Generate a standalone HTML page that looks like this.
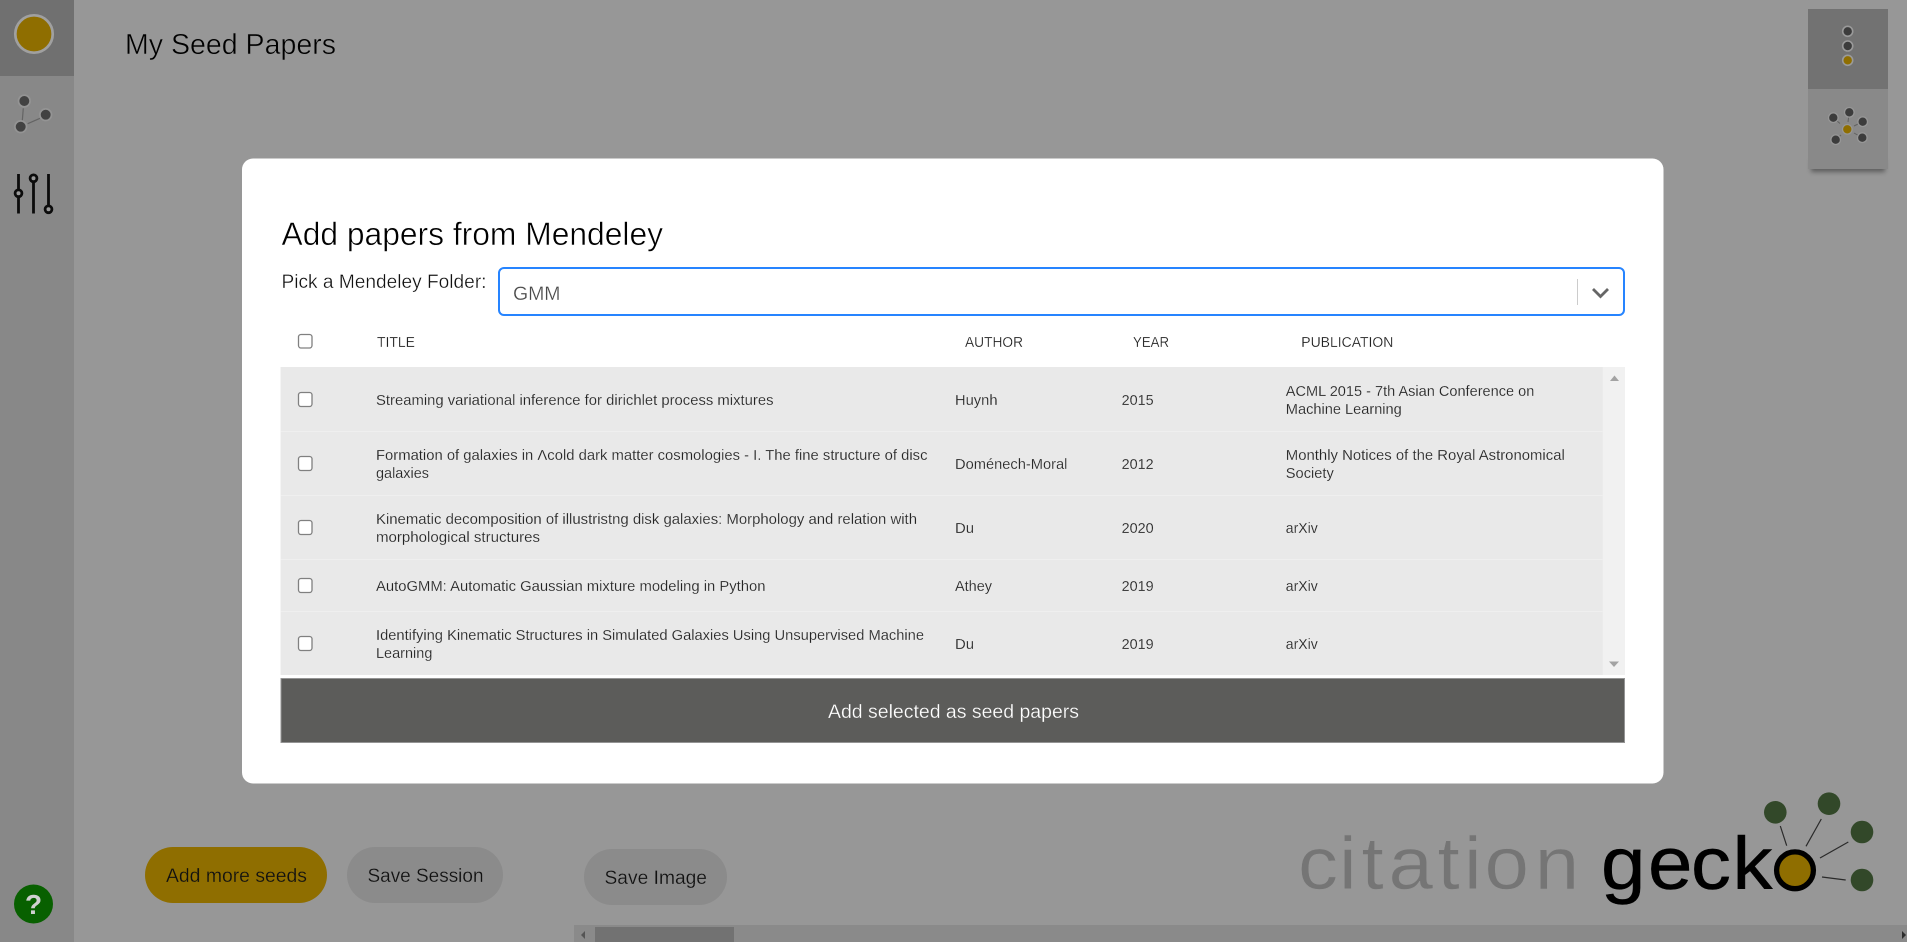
<!DOCTYPE html>
<html lang="en">
<head>
<meta charset="utf-8">
<title>Citation Gecko</title>
<style>
html,body{margin:0;padding:0;width:1907px;height:942px;overflow:hidden;background:#979797}
svg{display:block}
text{font-family:"Liberation Sans",sans-serif;white-space:pre}
.r{font-size:14.6px;fill:#222;stroke:#e9e9e9;stroke-width:.16px}
.h{font-size:14.4px;fill:#1c1c1c;stroke:#fff;stroke-width:.2px}
.b{font-size:19px;fill:#111;stroke-width:.25px}
.cb{fill:#fff;stroke:#808080;stroke-width:1.3}
</style>
</head>
<body>
<svg width="1907" height="942" viewBox="0 0 1907 942" xmlns="http://www.w3.org/2000/svg">
<defs>
<filter id="bl" x="-20%" y="-100%" width="140%" height="300%"><feGaussianBlur stdDeviation="2.5"/></filter>
</defs>
<rect width="1907" height="942" fill="#979797"/>

<!-- sidebar -->
<rect width="74" height="942" fill="#888"/>
<rect width="74" height="76" fill="#707070"/>
<circle cx="34" cy="34" r="18.700" fill="#8f6e00" stroke="#a0a0a0" stroke-width="2.700"/>
<g stroke="#646464" stroke-width="1.200"><line x1="23.300" y1="108.300" x2="22.300" y2="120.700"/><line x1="27.700" y1="123.700" x2="40" y2="118.300"/></g>
<g fill="#424242" stroke="#949494" stroke-width="1.700"><circle cx="24.300" cy="101" r="5.800"/><circle cx="45.700" cy="114.700" r="5.800"/><circle cx="20.700" cy="126.700" r="5.800"/></g>
<g stroke="#0c0c0c" stroke-width="2.800" fill="#9a9a9a">
<line x1="18.500" y1="174" x2="18.500" y2="213.500"/><line x1="33.500" y1="174" x2="33.500" y2="213.500"/><line x1="48.500" y1="174" x2="48.500" y2="213.500"/>
<circle cx="18.500" cy="193.300" r="3.400"/><circle cx="33.500" cy="178.300" r="3.400"/><circle cx="48.500" cy="209.300" r="3.400"/>
</g>
<circle cx="33.500" cy="904" r="19.500" fill="#086000"/>
<text x="33.500" y="914" text-anchor="middle" font-size="28" font-weight="700" fill="#d0d0d0">?</text>

<!-- page title -->
<text x="125" y="54" font-size="28.500" fill="#000" stroke="#979797" stroke-width=".5" textLength="211" lengthAdjust="spacingAndGlyphs">My Seed Papers</text>

<!-- top right panel -->
<rect x="1811" y="160" width="74" height="12" fill="#000" opacity=".38" filter="url(#bl)"/>
<rect x="1808" y="9" width="80" height="160" fill="#898989"/>
<rect x="1808" y="9" width="80" height="80" fill="#727272"/>
<g stroke="#9a9a9a" stroke-width="1.600">
<circle cx="1847.700" cy="31.300" r="5" fill="#3c3c3c"/>
<circle cx="1847.700" cy="46" r="5" fill="#3c3c3c"/>
<circle cx="1847.700" cy="60.300" r="5" fill="#8f6e00"/>
</g>
<g stroke="#626262" stroke-width="1">
<line x1="1840" y1="123.500" x2="1833.300" y2="117.700"/><line x1="1848" y1="122" x2="1849.300" y2="112.300"/><line x1="1854" y1="126" x2="1862.700" y2="121.700"/><line x1="1854" y1="133" x2="1862.300" y2="137.700"/><line x1="1841" y1="135" x2="1835.700" y2="139.700"/>
</g>
<g stroke="#979797" stroke-width="1.300" fill="#3c3c3c">
<circle cx="1833.300" cy="117.700" r="4.800"/><circle cx="1849.300" cy="112.300" r="4.800"/><circle cx="1862.700" cy="121.700" r="4.800"/><circle cx="1862.300" cy="137.700" r="4.800"/><circle cx="1835.700" cy="139.700" r="4.800"/>
<circle cx="1847.300" cy="129.300" r="4.800" fill="#8f6e00"/>
</g>

<!-- bottom buttons -->
<rect x="145" y="847" width="182" height="56" rx="28" fill="#8f6e00"/>
<text class="b" style="stroke:#8f6e00" x="166" y="882" textLength="141" lengthAdjust="spacingAndGlyphs">Add more seeds</text>
<rect x="347" y="847" width="156" height="56" rx="28" fill="#8b8b8b"/>
<text class="b" style="stroke:#8b8b8b" x="367.500" y="882" textLength="116" lengthAdjust="spacingAndGlyphs">Save Session</text>
<rect x="584" y="849" width="143" height="56" rx="28" fill="#8b8b8b"/>
<text class="b" style="stroke:#8b8b8b" x="604.500" y="884" textLength="102.500" lengthAdjust="spacingAndGlyphs">Save Image</text>

<!-- logo -->
<g transform="translate(1298,889) scale(1.08,1)">
<text x="0 37.96 58.8 83.8 129.2 153.7 172.7 219.2" y="0" font-size="74" fill="#757575" stroke="#979797" stroke-width=".5">citation</text>
</g>
<g transform="translate(1601,889) scale(1.08,1)">
<text x="0 43.5 83.3 121.8" y="0" font-size="74" fill="#000" stroke="#000" stroke-width=".5">geck</text>
</g>
<text x="1776" y="889" font-size="72" fill="#000" textLength="38" lengthAdjust="spacingAndGlyphs">o</text>
<circle cx="1795" cy="870.300" r="18.400" fill="#8f6e00" stroke="#000" stroke-width="5.300"/>
<g stroke="#2a2a2a" stroke-width="1.200">
<line x1="1780.300" y1="826" x2="1786.700" y2="845.700"/><line x1="1821.300" y1="819" x2="1806" y2="846.300"/><line x1="1848.300" y1="842" x2="1820" y2="858"/><line x1="1822" y1="877" x2="1845.700" y2="880"/>
</g>
<g fill="#324829"><circle cx="1775.300" cy="812.300" r="11.300"/><circle cx="1829" cy="803.700" r="11.300"/><circle cx="1862" cy="832" r="11.300"/><circle cx="1862" cy="880" r="11.300"/></g>

<!-- horizontal scrollbar -->
<rect x="574" y="925" width="1333" height="17" fill="#8a8a8a"/>
<rect x="595" y="927" width="139" height="15" fill="#727272"/>
<path d="M581 935l4-4v8z" fill="#555"/>
<path d="M1906 935l-4-4v8z" fill="#2e2e2e"/>

<!-- modal -->
<rect x="242" y="158.500" width="1421.500" height="625" rx="11" fill="#fff"/>
<text x="281.500" y="244.800" font-size="32" fill="#000" stroke="#fff" stroke-width=".5" textLength="381.500" lengthAdjust="spacingAndGlyphs">Add papers from Mendeley</text>
<text x="281.500" y="288" font-size="19" fill="#111" stroke="#fff" stroke-width=".3" textLength="205" lengthAdjust="spacingAndGlyphs">Pick a Mendeley Folder:</text>

<rect x="499" y="268" width="1125" height="47" rx="5" fill="#fff" stroke="#2684ff" stroke-width="2"/>
<text x="513" y="300" font-size="19" fill="#4a4a4a" stroke="#fff" stroke-width=".25" textLength="47.500" lengthAdjust="spacingAndGlyphs">GMM</text>
<rect x="1577" y="279" width="1" height="26" fill="#ccc"/>
<path d="M1593 289l7.500 7.500 7.500-7.500" fill="none" stroke="#666" stroke-width="2.800"/>

<!-- table header -->
<rect class="cb" x="298.500" y="334.500" width="13.500" height="13.500" rx="2.500"/>
<text class="h" x="377" y="346.800" textLength="38" lengthAdjust="spacingAndGlyphs">TITLE</text>
<text class="h" x="965" y="346.800" textLength="58" lengthAdjust="spacingAndGlyphs">AUTHOR</text>
<text class="h" x="1133" y="346.800" textLength="36" lengthAdjust="spacingAndGlyphs">YEAR</text>
<text class="h" x="1301.300" y="346.800" textLength="92" lengthAdjust="spacingAndGlyphs">PUBLICATION</text>

<!-- table body -->
<rect x="280.600" y="367" width="1344.400" height="308" fill="#f1f1f1"/>
<rect x="280.600" y="367" width="1322.100" height="308" fill="#e9e9e9"/>
<g fill="#efefef">
<rect x="280.600" y="431" width="1322.100" height="1"/><rect x="280.600" y="495" width="1322.100" height="1"/><rect x="280.600" y="559" width="1322.100" height="1"/><rect x="280.600" y="611" width="1322.100" height="1"/>
</g>
<path d="M1614.500 375.500l4.500 5.500h-9z" fill="#a3a3a3"/>
<path d="M1614 667l5-5.500h-10z" fill="#a3a3a3"/>

<g>
<rect class="cb" x="298.500" y="392.500" width="13.500" height="14" rx="2.500"/>
<rect class="cb" x="298.500" y="456.500" width="13.500" height="14" rx="2.500"/>
<rect class="cb" x="298.500" y="520.500" width="13.500" height="14" rx="2.500"/>
<rect class="cb" x="298.500" y="578.500" width="13.500" height="14" rx="2.500"/>
<rect class="cb" x="298.500" y="636.500" width="13.500" height="14" rx="2.500"/>
</g>

<text class="r" x="376" y="405" textLength="397.500" lengthAdjust="spacingAndGlyphs">Streaming variational inference for dirichlet process mixtures</text>
<text class="r" x="955" y="405" textLength="42.500" lengthAdjust="spacingAndGlyphs">Huynh</text>
<text class="r" x="1121.600" y="405" textLength="32" lengthAdjust="spacingAndGlyphs">2015</text>
<text class="r" x="1285.800" y="396" textLength="248.500" lengthAdjust="spacingAndGlyphs">ACML 2015 - 7th Asian Conference on</text>
<text class="r" x="1285.800" y="414" textLength="116" lengthAdjust="spacingAndGlyphs">Machine Learning</text>

<text class="r" x="376" y="460" textLength="551.500" lengthAdjust="spacingAndGlyphs">Formation of galaxies in Λcold dark matter cosmologies - I. The fine structure of disc</text>
<text class="r" x="376" y="478" textLength="53" lengthAdjust="spacingAndGlyphs">galaxies</text>
<text class="r" x="955" y="469" textLength="112.400" lengthAdjust="spacingAndGlyphs">Doménech-Moral</text>
<text class="r" x="1121.600" y="469" textLength="32" lengthAdjust="spacingAndGlyphs">2012</text>
<text class="r" x="1285.800" y="460" textLength="279" lengthAdjust="spacingAndGlyphs">Monthly Notices of the Royal Astronomical</text>
<text class="r" x="1285.800" y="478" textLength="48" lengthAdjust="spacingAndGlyphs">Society</text>

<text class="r" x="376" y="524" textLength="541" lengthAdjust="spacingAndGlyphs">Kinematic decomposition of illustristng disk galaxies: Morphology and relation with</text>
<text class="r" x="376" y="542" textLength="164" lengthAdjust="spacingAndGlyphs">morphological structures</text>
<text class="r" x="955" y="533" textLength="19" lengthAdjust="spacingAndGlyphs">Du</text>
<text class="r" x="1121.600" y="533" textLength="32" lengthAdjust="spacingAndGlyphs">2020</text>
<text class="r" x="1285.800" y="533" textLength="32" lengthAdjust="spacingAndGlyphs">arXiv</text>

<text class="r" x="376" y="591" textLength="389.500" lengthAdjust="spacingAndGlyphs">AutoGMM: Automatic Gaussian mixture modeling in Python</text>
<text class="r" x="955" y="591" textLength="37" lengthAdjust="spacingAndGlyphs">Athey</text>
<text class="r" x="1121.600" y="591" textLength="32" lengthAdjust="spacingAndGlyphs">2019</text>
<text class="r" x="1285.800" y="591" textLength="32" lengthAdjust="spacingAndGlyphs">arXiv</text>

<text class="r" x="376" y="640" textLength="548" lengthAdjust="spacingAndGlyphs">Identifying Kinematic Structures in Simulated Galaxies Using Unsupervised Machine</text>
<text class="r" x="376" y="658" textLength="56.400" lengthAdjust="spacingAndGlyphs">Learning</text>
<text class="r" x="955" y="649" textLength="19" lengthAdjust="spacingAndGlyphs">Du</text>
<text class="r" x="1121.600" y="649" textLength="32" lengthAdjust="spacingAndGlyphs">2019</text>
<text class="r" x="1285.800" y="649" textLength="32" lengthAdjust="spacingAndGlyphs">arXiv</text>

<!-- add button -->
<rect x="281" y="678.500" width="1343.500" height="64" fill="#5c5c5a" stroke="#949494" stroke-width="1"/>
<text x="828" y="718" font-size="19" fill="#fff" stroke="#5c5c5a" stroke-width=".25" textLength="251" lengthAdjust="spacingAndGlyphs">Add selected as seed papers</text>
</svg>
</body>
</html>
